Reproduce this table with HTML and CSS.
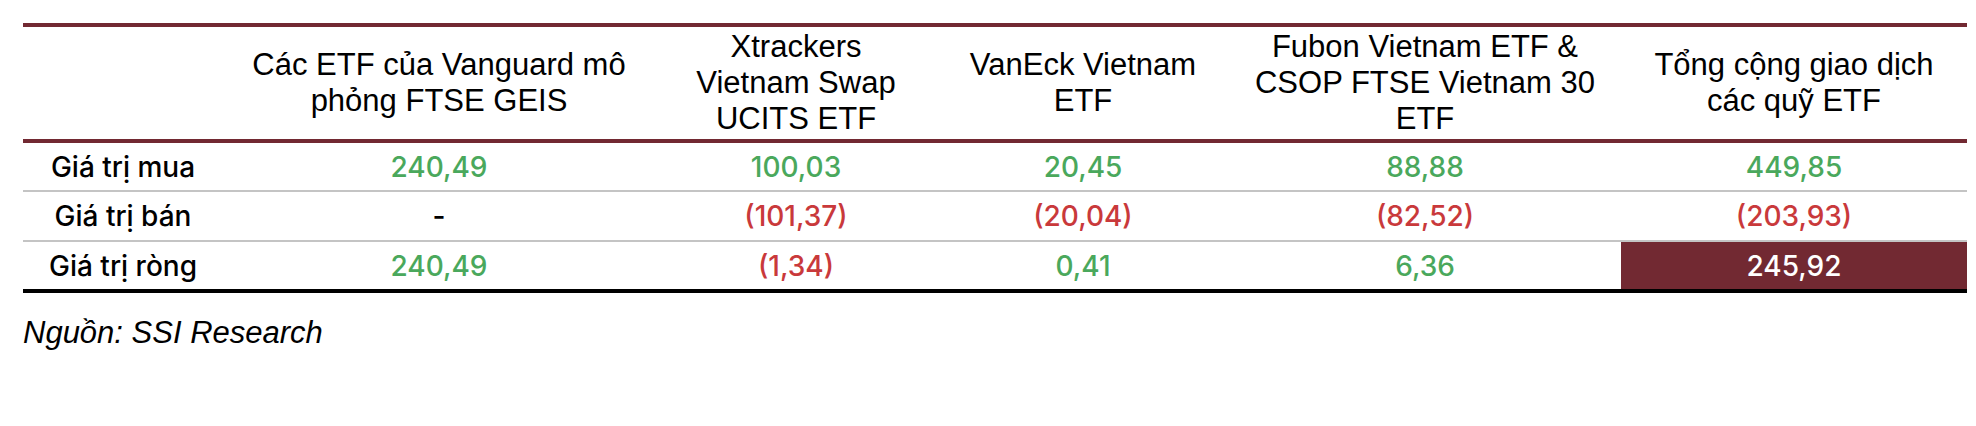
FILE: index.html
```html
<!DOCTYPE html>
<html lang="vi">
<head>
<meta charset="utf-8">
<title>Giao dịch các quỹ ETF</title>
<link rel="stylesheet" href="styles.css">
</head>
<body>
<div class="wrap">
  <div class="table">
    <div class="row head">
      <div class="cell"></div>
      <div class="cell">Các ETF của Vanguard mô<br>phỏng FTSE GEIS</div>
      <div class="cell">Xtrackers<br>Vietnam Swap<br>UCITS ETF</div>
      <div class="cell">VanEck Vietnam<br>ETF</div>
      <div class="cell">Fubon Vietnam ETF &amp;<br>CSOP FTSE Vietnam 30<br>ETF</div>
      <div class="cell">Tổng cộng giao dịch<br>các quỹ ETF</div>
    </div>
    <div class="row body sep">
      <div class="cell label">Giá trị mua</div>
      <div class="cell pos">240,49</div>
      <div class="cell pos">100,03</div>
      <div class="cell pos">20,45</div>
      <div class="cell pos">88,88</div>
      <div class="cell pos">449,85</div>
    </div>
    <div class="row body sep mid">
      <div class="cell label">Giá trị bán</div>
      <div class="cell dash">-</div>
      <div class="cell neg">(101,37)</div>
      <div class="cell neg">(20,04)</div>
      <div class="cell neg">(82,52)</div>
      <div class="cell neg">(203,93)</div>
    </div>
    <div class="row body last">
      <div class="cell label">Giá trị ròng</div>
      <div class="cell pos">240,49</div>
      <div class="cell neg">(1,34)</div>
      <div class="cell pos">0,41</div>
      <div class="cell pos">6,36</div>
      <div class="cell total">245,92</div>
    </div>
  </div>
  <p class="source">Nguồn: SSI Research</p>
</div>
</body>
</html>
```

FILE: styles.css
```css
* {
  box-sizing: border-box;
}

html, body {
  margin: 0;
  padding: 0;
  background: #ffffff;
}

.wrap {
  padding: 23px 0 0 23px;
}

.table {
  width: 1944px;
}

.row {
  display: grid;
  grid-template-columns: 200px 432px 282px 292px 392px 346px;
}

.cell {
  display: flex;
  align-items: center;
  justify-content: center;
  text-align: center;
  white-space: nowrap;
}

.head {
  height: 120px;
  border-top: 4px solid #722932;
  border-bottom: 4px solid #722932;
  font-family: "Liberation Sans", Arial, sans-serif;
  font-size: 31px;
  line-height: 36px;
  color: #000000;
}

.body {
  font-family: Inter, "Noto Sans", sans-serif;
  font-size: 28px;
  font-weight: 500;
  color: #000000;
}

.sep {
  height: 49px;
  border-bottom: 2px solid #c4c4c4;
}

.mid {
  height: 50px;
}

.last {
  height: 51px;
  border-bottom: 4px solid #000000;
}

.pos {
  color: #4aa85c;
}

.neg {
  color: #c9393b;
}

.dash {
  color: #000000;
}

.total {
  background: #722932;
  color: #ffffff;
}

.source {
  margin: 23px 0 0 0;
  font-family: "Liberation Sans", Arial, sans-serif;
  font-style: italic;
  font-size: 31px;
  line-height: 34px;
  color: #000000;
}
```
